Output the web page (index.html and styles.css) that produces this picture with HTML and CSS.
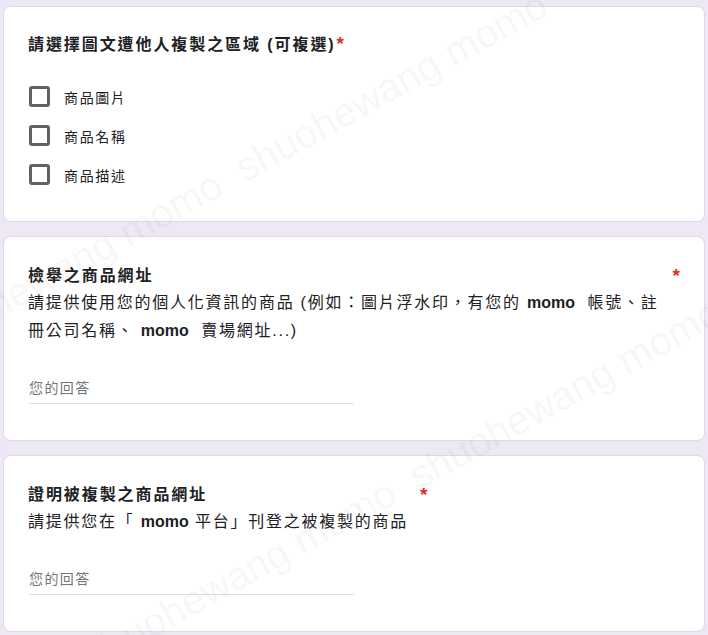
FILE: index.html
```html
<!DOCTYPE html>
<html lang="zh-Hant">
<head>
    <meta charset="UTF-8">
    <meta name="viewport" content="width=device-width, initial-scale=1.0">
    <title>商品圖文遭複製檢舉</title>
    <link rel="stylesheet" href="styles.css">
</head>
<body>
    <div class="page">
        <!-- 複製區域 -->
        <div class="card">
            <div class="q-title">請選擇圖文遭他人複製之區域 (可複選)<span class="req">*</span></div>
            <div class="options">
                <label class="option"><span class="box"></span><span class="opt-text">商品圖片</span></label>
                <label class="option"><span class="box"></span><span class="opt-text">商品名稱</span></label>
                <label class="option"><span class="box"></span><span class="opt-text">商品描述</span></label>
            </div>
        </div>

        <!-- 檢舉網址 -->
        <div class="card question">
            <div class="q-head">
                <div class="q-text">
                    <div class="q-title">檢舉之商品網址</div>
                    <div class="q-desc">請提供使用您的個人化資訊的商品 (例如：圖片浮水印，有您的 <b>momo</b>&nbsp; 帳號、註冊公司名稱、 <b>momo</b>&nbsp; 賣場網址...)</div>
                </div>
                <span class="req">*</span>
            </div>
            <div class="answer">您的回答</div>
        </div>

        <!-- 被複製網址 -->
        <div class="card question">
            <div class="q-head">
                <div class="q-text">
                    <div class="q-title">證明被複製之商品網址</div>
                    <div class="q-desc">請提供您在「 <b>momo</b> 平台」刊登之被複製的商品</div>
                </div>
                <span class="req">*</span>
            </div>
            <div class="answer">您的回答</div>
        </div>

        <div class="watermark">
            <div class="wm-line wm-a">shuohewang momo  shuohewang momo  shuohewang momo  shuohewang momo</div>
            <div class="wm-line wm-b">shuohewang momo  shuohewang momo  shuohewang momo  shuohewang momo</div>
        </div>
    </div>
</body>
</html>
```

FILE: styles.css
```css
body {
    margin: 0;
    font-family: "Liberation Sans", "Noto Sans CJK TC", sans-serif;
    color: #202124;
    background: #ede7f6;
}
.page {
    position: relative;
    display: flex;
    flex-direction: column;
    gap: 14px;
    padding: 6px 3px 3px;
    min-height: 635px;
    box-sizing: border-box;
    overflow: hidden;
}
.card {
    background: #fff;
    border: 1px solid #dadce0;
    border-radius: 8px;
    padding: 25px 24px 27px;
}
.question {
    padding: 26px 24px 36px;
}
.q-title {
    font-size: 16px;
    font-weight: bold;
    line-height: 26px;
    letter-spacing: .12em;
}
.req {
    color: #d93025;
    font-size: 19px;
    font-weight: bold;
    line-height: 0;
    letter-spacing: 0;
    margin-left: 1px;
}
.options {
    margin-top: 19px;
}
.option {
    display: flex;
    align-items: center;
    height: 39px;
}
.box {
    width: 21px;
    height: 21px;
    box-sizing: border-box;
    border: 3px solid #5f6368;
    border-radius: 3px;
    margin: 0 14px 0 1px;
}
.opt-text {
    font-size: 14px;
    letter-spacing: .12em;
}
.q-head {
    display: flex;
    align-items: flex-start;
}
.q-text {
    min-width: 0;
}
.q-head .req {
    flex: none;
    margin-left: 12px;
    line-height: 26px;
}
.q-desc {
    font-size: 16px;
    line-height: 28px;
    letter-spacing: .11em;
}
.q-desc b {
    letter-spacing: 0;
}
.answer {
    width: 325px;
    margin: 31px 0 0 1px;
    padding-bottom: 3px;
    border-bottom: 1px solid #e0e0e0;
    font-size: 14px;
    line-height: 24px;
    letter-spacing: .1em;
    color: #70757a;
}
.watermark {
    position: absolute;
    top: 0;
    left: 0;
    right: 0;
    bottom: 0;
    pointer-events: none;
    overflow: hidden;
}
.wm-line {
    position: absolute;
    white-space: pre;
    font-family: "Liberation Sans", sans-serif;
    font-size: 40px;
    line-height: 40px;
    color: rgba(0, 0, 0, .05);
    transform-origin: 0 23px;
    transform: rotate(-29deg);
}
.wm-a {
    left: -85px;
    top: 330px;
}
.wm-b {
    left: -236px;
    top: 818px;
}
```
